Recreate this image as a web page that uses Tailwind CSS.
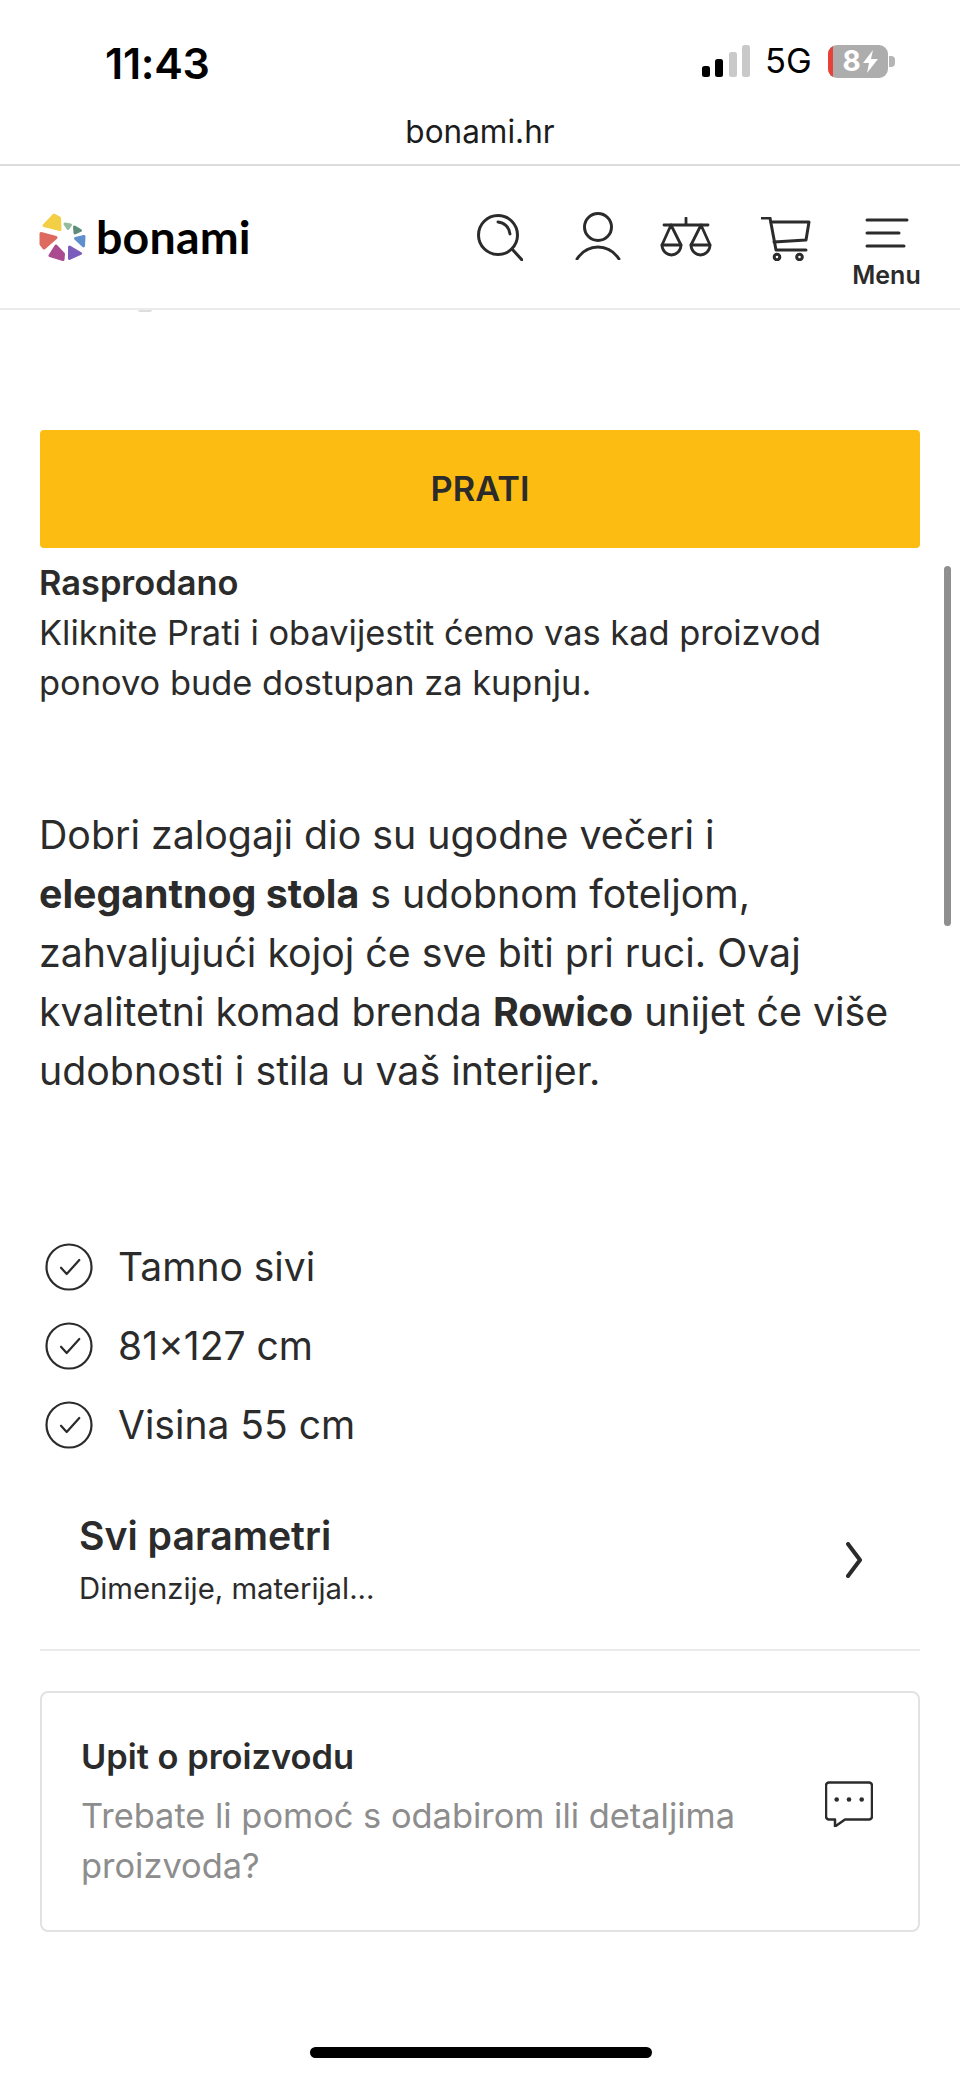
<!doctype html>
<html lang="hr">
<head>
<meta charset="utf-8">
<script src="https://cdn.jsdelivr.net/npm/@tailwindcss/browser@4"></script>
</head>
<body class="bg-white">
<div class="relative w-[960px] h-[2078px] overflow-hidden bg-white font-['Inter',sans-serif] text-[#2b2b2b]">
  <!-- iOS status bar -->
  <div class="h-[106px] flex items-start justify-between pl-[105px] pr-[65px] pt-[38px] text-black">
    <span class="text-[43px] leading-[50px] font-semibold tracking-[-0.3px]">11:43</span>
    <div class="flex items-center h-[50px] -mt-[2px]">
      <svg width="48" height="32" viewBox="0 0 48 32">
        <rect x="0" y="21" width="8" height="11" rx="2.500" fill="#000"/>
        <rect x="13" y="14" width="8" height="18" rx="2.500" fill="#000"/>
        <rect x="27" y="7" width="8" height="25" rx="2.500" fill="#c9c9c9"/>
        <rect x="40" y="0" width="8" height="32" rx="2.500" fill="#c9c9c9"/>
      </svg>
      <span class="ml-[15px] w-[43px] text-[34.500px] leading-[40px] font-normal">5G</span>
      <div class="relative ml-[20px] w-[60px] h-[33px] rounded-[9px] bg-[#adadad] overflow-hidden flex items-center justify-center gap-[1px] pl-[5px]">
        <span class="absolute left-0 top-0 bottom-0 w-[5px] bg-[#e8413a]"></span>
        <span class="text-white text-[28px] leading-[33px] font-bold">8</span>
        <svg width="17" height="23" viewBox="0 0 17 23"><path d="M11 0 1 13h6L5 23 16 9H9z" fill="#fff"/></svg>
      </div>
      <div class="ml-[1px] w-[6px] h-[11px] rounded-r-[4px] bg-[#b5b5b5]"></div>
    </div>
  </div>
  <!-- browser URL bar -->
  <div class="h-[60px] border-b-[2px] border-[#dcdcdc] text-center text-[31.500px] leading-[52px] text-[#1c1c1c]">bonami.hr</div>
  <!-- site header -->
  <header class="relative h-[144px] border-b-[2px] border-[#ebebeb] flex items-start justify-between pl-[39px] pr-[41px]">
    <div class="flex items-start gap-[9px] pt-[46px]">
      <svg width="48" height="49" viewBox="0 0 48 49" stroke-width="3" stroke-linejoin="round">
        <polygon points="15,3 20.500,6 21,17.500 5,13.500" fill="#f3cf45" stroke="#f3cf45"/>
        <polygon points="2,21.500 17,25.500 5,36 2,32" fill="#de6a5f" stroke="#de6a5f"/>
        <polygon points="17,34 24.500,42 24,47.500 11,43.500" fill="#aa4a8f" stroke="#aa4a8f"/>
        <polygon points="30.500,35 41.500,41.500 30.500,46.500" fill="#7c5dbb" stroke="#7c5dbb"/>
        <polygon points="36.500,26.500 45,24.500 44.500,34" fill="#5f8fcd" stroke="#5f8fcd"/>
        <polygon points="35.500,15 41.500,18.500 36,21" fill="#5e8e7a" stroke="#5e8e7a"/>
        <polygon points="26,12 31.500,13 29,16.500" fill="#95bc9f" stroke="#95bc9f"/>
      </svg>
      <span class="text-[46.500px] leading-[50px] font-['Lato',sans-serif] font-bold text-black tracking-[0.2px] -mt-[1px]">bonami</span>
    </div>
    <div class="flex items-start">
      <svg class="mt-[48px]" width="46" height="47" viewBox="0 0 46 47" fill="none" stroke="#2b2b2b" stroke-width="3" stroke-linecap="round"><circle cx="21" cy="21" r="19.500"/><path d="M35 35 45 46"/><path d="M21 8a13 13 0 0 1 12 12"/></svg>
      <svg class="mt-[46px] ml-[52px]" width="46" height="48" viewBox="0 0 46 48" fill="none" stroke="#2b2b2b" stroke-width="3" stroke-linecap="round"><circle cx="23" cy="15" r="13.500"/><path d="M2 47C8 38 15 35 23 35s15 3 21 12"/></svg>
      <svg class="mt-[51px] ml-[39px]" width="52" height="40" viewBox="0 0 52 40" fill="none" stroke="#2b2b2b" stroke-width="2.800" stroke-linejoin="round" stroke-linecap="round"><path d="M26 1v7M4 8h44"/><path d="M11 8 2 28a9.500 10 0 0 0 19 0zM41 8 31 28a9.500 10 0 0 0 19 0z"/><path d="M2 28h19M31 28h19"/></svg>
      <svg class="mt-[51px] ml-[49px]" width="50" height="44" viewBox="0 0 50 44" fill="none" stroke="#2b2b2b" stroke-width="3" stroke-linecap="round" stroke-linejoin="round"><path d="M1 1h8l6 32h30"/><path d="M10 5h38l-3 18-32 2"/><circle cx="16" cy="40" r="2.800"/><circle cx="38.500" cy="40" r="2.800"/></svg>
      <div class="ml-[43px] w-[65px] flex flex-col items-center pt-[52px]">
        <svg width="44" height="30" viewBox="0 0 44 30" fill="none" stroke="#2b2b2b" stroke-width="3" stroke-linecap="round"><path d="M2 2h40M2 15h32M2 28h37"/></svg>
        <span class="text-[25px] leading-[30px] font-semibold mt-[12px]">Menu</span>
      </div>
    </div>
    <span class="absolute left-[138px] -bottom-[4px] w-[14px] h-[2px] rounded-b-full bg-[#dedede]"></span>
  </header>
  <main class="px-[40px]">
    <button class="mt-[120px] w-full h-[118px] rounded-[4px] bg-[#fdbc11] text-[34.400px] font-semibold text-[#2b2b2b]">PRATI</button>
    <div class="mt-[10px] -ml-[1px] text-[34.400px] leading-[50px] text-[#2b2b2b]">
      <p class="font-semibold">Rasprodano</p>
      <p>Kliknite Prati i obavijestit ćemo vas kad proizvod<br>ponovo bude dostupan za kupnju.</p>
    </div>
    <p class="mt-[97px] -ml-[1px] text-[39.300px] leading-[59px] text-[#2b2b2b]">Dobri zalogaji dio su ugodne večeri i<br><b class="font-bold">elegantnog stola</b> s udobnom foteljom,<br>zahvaljujući kojoj će sve biti pri ruci. Ovaj<br>kvalitetni komad brenda <b class="font-bold">Rowico</b> unijet će više<br>udobnosti i stila u vaš interijer.</p>
    <ul class="mt-[142px] flex flex-col gap-[30px] text-[39px] leading-[49px]">
      <li class="flex items-center gap-[25px] pl-[5px]"><svg width="48" height="48" viewBox="0 0 48 48" fill="none" stroke="#2b2b2b" stroke-width="2.200"><circle cx="24" cy="24" r="22.500"/><path d="M16 24.700l5.700 6.300L34.300 17" stroke-linecap="round" stroke-linejoin="round"/></svg>Tamno sivi</li>
      <li class="flex items-center gap-[25px] pl-[5px]"><svg width="48" height="48" viewBox="0 0 48 48" fill="none" stroke="#2b2b2b" stroke-width="2.200"><circle cx="24" cy="24" r="22.500"/><path d="M16 24.700l5.700 6.300L34.300 17" stroke-linecap="round" stroke-linejoin="round"/></svg>81×127 cm</li>
      <li class="flex items-center gap-[25px] pl-[5px]"><svg width="48" height="48" viewBox="0 0 48 48" fill="none" stroke="#2b2b2b" stroke-width="2.200"><circle cx="24" cy="24" r="22.500"/><path d="M16 24.700l5.700 6.300L34.300 17" stroke-linecap="round" stroke-linejoin="round"/></svg>Visina 55 cm</li>
    </ul>
    <div class="mt-[50px] h-[152px] border-b-[2px] border-[#ebebeb] flex items-start justify-between pl-[39px] pr-[58px] pt-[12px]">
      <div>
        <p class="text-[39.200px] leading-[50px] font-semibold">Svi parametri</p>
        <p class="text-[29.300px] leading-[34px] mt-[11px]">Dimenzije, materijal...</p>
      </div>
      <svg class="mt-[31px]" width="16" height="36" viewBox="0 0 16 36" fill="none" stroke="#2b2b2b" stroke-width="4" stroke-linecap="round" stroke-linejoin="round"><path d="M2 2l12 16L2 34"/></svg>
    </div>
    <section class="mt-[40px] h-[241px] rounded-[8px] border-[2px] border-[#e2e2e2] flex items-start justify-between pl-[39px] pr-[45px] pt-[39px]">
      <div>
        <h2 class="text-[34.400px] leading-[50px] font-semibold">Upit o proizvodu</h2>
        <p class="mt-[9px] text-[34.400px] leading-[50px] text-[#8d8d8d]">Trebate li pomoć s odabirom ili detaljima<br>proizvoda?</p>
      </div>
      <svg class="mt-[49px]" width="48" height="46" viewBox="0 0 48 46" fill="none" stroke="#2b2b2b" stroke-width="2.500" stroke-linejoin="round"><path d="M4 1.500h40a3 3 0 0 1 3 3v31a3 3 0 0 1-3 3H20l-10 7v-7H4a3 3 0 0 1-3-3v-31a3 3 0 0 1 3-3z"/><circle cx="11.700" cy="18.500" r="2.300" fill="#2b2b2b" stroke="none"/><circle cx="24" cy="18.500" r="2.300" fill="#2b2b2b" stroke="none"/><circle cx="36.700" cy="18.500" r="2.300" fill="#2b2b2b" stroke="none"/></svg>
    </section>
  </main>
  <!-- scrollbar overlay -->
  <div class="absolute left-[944px] top-[566px] w-[7px] h-[360px] rounded-full bg-[#8f8f8f]"></div>
  <!-- home indicator -->
  <div class="absolute left-[310px] top-[2047px] w-[342px] h-[11px] rounded-full bg-black"></div>
</div>
</body>
</html>
